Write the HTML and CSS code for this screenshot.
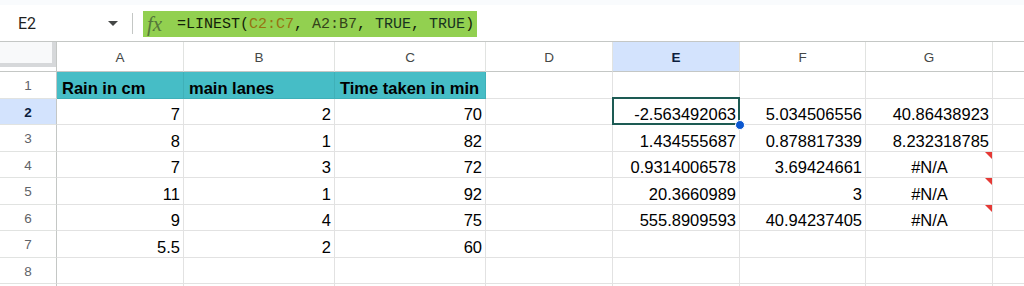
FILE: index.html
```html
<!DOCTYPE html>
<html lang="en">
<head>
<meta charset="utf-8">
<title>LINEST sheet</title>
<link rel="stylesheet" href="styles.css">
</head>
<body>
<div class="app">
  <div class="top-strip"></div>
  <div class="formula-bar">
    <div class="name-box"><span class="cell-ref">E2</span><span class="caret"></span></div>
    <div class="divider"></div>
    <div class="formula"><span class="fx">fx</span><span class="expr">=LINEST(<span class="rng1">C2:C7</span>, <span class="rng2">A2:B7</span>, <span class="kw">TRUE</span>, <span class="kw">TRUE</span>)</span></div>
  </div>
  <div class="sheet">
    <div class="corner"><div class="corner-box"></div></div>
    <div class="col-head">A</div>
    <div class="col-head">B</div>
    <div class="col-head">C</div>
    <div class="col-head">D</div>
    <div class="col-head active">E</div>
    <div class="col-head">F</div>
    <div class="col-head">G</div>
    <div class="col-head last"></div>

    <div class="row-head">1</div>
    <div class="cell hdr">Rain in cm</div>
    <div class="cell hdr">main lanes</div>
    <div class="cell hdr">Time taken in min</div>
    <div class="cell"></div>
    <div class="cell"></div>
    <div class="cell"></div>
    <div class="cell"></div>
    <div class="cell last"></div>

    <div class="row-head active">2</div>
    <div class="cell num">7</div>
    <div class="cell num">2</div>
    <div class="cell num">70</div>
    <div class="cell"></div>
    <div class="cell num selected">-2.563492063<span class="sel-box"></span><span class="fill-handle"></span></div>
    <div class="cell num">5.034506556</div>
    <div class="cell num">40.86438923</div>
    <div class="cell last"></div>

    <div class="row-head">3</div>
    <div class="cell num">8</div>
    <div class="cell num">1</div>
    <div class="cell num">82</div>
    <div class="cell"></div>
    <div class="cell num">1.434555687</div>
    <div class="cell num">0.878817339</div>
    <div class="cell num">8.232318785</div>
    <div class="cell last"></div>

    <div class="row-head">4</div>
    <div class="cell num">7</div>
    <div class="cell num">3</div>
    <div class="cell num">72</div>
    <div class="cell"></div>
    <div class="cell num">0.9314006578</div>
    <div class="cell num">3.69424661</div>
    <div class="cell center error">#N/A</div>
    <div class="cell last"></div>

    <div class="row-head">5</div>
    <div class="cell num">11</div>
    <div class="cell num">1</div>
    <div class="cell num">92</div>
    <div class="cell"></div>
    <div class="cell num">20.3660989</div>
    <div class="cell num">3</div>
    <div class="cell center error">#N/A</div>
    <div class="cell last"></div>

    <div class="row-head">6</div>
    <div class="cell num">9</div>
    <div class="cell num">4</div>
    <div class="cell num">75</div>
    <div class="cell"></div>
    <div class="cell num">555.8909593</div>
    <div class="cell num">40.94237405</div>
    <div class="cell center error">#N/A</div>
    <div class="cell last"></div>

    <div class="row-head">7</div>
    <div class="cell num">5.5</div>
    <div class="cell num">2</div>
    <div class="cell num">60</div>
    <div class="cell"></div>
    <div class="cell"></div>
    <div class="cell"></div>
    <div class="cell"></div>
    <div class="cell last"></div>

    <div class="row-head">8</div>
    <div class="cell"></div>
    <div class="cell"></div>
    <div class="cell"></div>
    <div class="cell"></div>
    <div class="cell"></div>
    <div class="cell"></div>
    <div class="cell"></div>
    <div class="cell last"></div>

    <div class="row-head"></div>
    <div class="cell"></div>
    <div class="cell"></div>
    <div class="cell"></div>
    <div class="cell"></div>
    <div class="cell"></div>
    <div class="cell"></div>
    <div class="cell"></div>
    <div class="cell last"></div>
  </div>
</div>
</body>
</html>
```
FILE: styles.css
```css
* { box-sizing: border-box; }
html, body { margin: 0; padding: 0; background: #ffffff; }
body { font-family: "Liberation Sans", Arial, sans-serif; color: #000; }
.app { width: 1024px; height: 286px; overflow: hidden; }

.top-strip { height: 5px; background: #f9fbfd; }

.formula-bar {
  height: 37px;
  display: flex;
  align-items: flex-start;
  border-bottom: 1px solid #c4c7c5;
  background: #fff;
}
.name-box {
  width: 124px;
  height: 36px;
  display: flex;
  align-items: center;
  justify-content: space-between;
  padding: 0 6px 0 18px;
}
.cell-ref { font-family: Roboto, "Liberation Sans", sans-serif; font-size: 16px; color: #1f1f1f; }
.caret {
  width: 0; height: 0;
  border-left: 5px solid transparent;
  border-right: 5px solid transparent;
  border-top: 5px solid #444746;
}
.divider { width: 1px; height: 21px; background: #c4c7c5; margin: 8px 0 0 8px; }
.formula {
  margin: 6px 0 0 10px;
  width: 334px;
  height: 26px;
  background: #92d050;
  display: flex;
  align-items: center;
}
.fx {
  font-family: "Liberation Serif", serif;
  font-style: italic;
  font-size: 21px;
  color: #55773a;
  margin-left: 4px;
  width: 30px;
  line-height: 20px;
}
.expr {
  font-family: "Liberation Mono", "DejaVu Sans Mono", monospace;
  font-size: 15px;
  color: #122008;
  white-space: pre;
  line-height: 20px;
  padding-top: 1px;
}
.rng1 { color: #967412; }
.rng2 { color: #35431a; }
.kw { color: #173320; }

.sheet {
  display: grid;
  grid-template-columns: 57px 127px 151px 151px 127px 127px 126px 127px 1fr;
  grid-template-rows: 30px 27px 26px 27px 26px 27px 26px 27px 26px 27px;
}
.corner { border-right: 1px solid #c4c7c5; border-bottom: 1px solid #c4c7c5; }
.corner-box {
  width: 56px; height: 25px;
  background: #f8f9fa;
  border-right: 4px solid #d6d8da;
  border-bottom: 4px solid #d6d8da;
}
.col-head {
  display: flex;
  align-items: center;
  justify-content: center;
  font-size: 13.5px;
  color: #444746;
  border-right: 1px solid #e1e3e1;
  border-bottom: 1px solid #c4c7c5;
  padding-top: 1px;
}
.col-head.active { background: #d3e3fd; color: #0b1d3e; font-weight: bold; }
.row-head {
  display: flex;
  align-items: center;
  justify-content: center;
  font-size: 13.5px;
  color: #5f6368;
  border-right: 1px solid #c4c7c5;
  border-bottom: 1px solid #e1e3e1;
  padding-top: 1px;
}
.row-head.active { background: #d3e3fd; color: #0b1d3e; font-weight: bold; }
.cell {
  position: relative;
  display: flex;
  align-items: flex-end;
  font-size: 16.5px;
  line-height: 19px;
  padding: 0 4px 0 5px;
  border-right: 1px solid #e2e2e2;
  border-bottom: 1px solid #e2e2e2;
  white-space: nowrap;
}
.last { border-right: none; }
.num { justify-content: flex-end; padding-right: 3px; }
.center { justify-content: center; }
.hdr { background: #46bdc6; font-weight: bold; border-right-color: #3fb0b8; border-bottom-color: #3fb0b8; }
.selected { z-index: 2; }
.sel-box {
  position: absolute;
  left: -1px; top: -2px; right: -1px; bottom: -1px;
  border: 2px solid #1d5b54;
  pointer-events: none;
}
.fill-handle {
  position: absolute;
  right: -6px; bottom: -6px;
  width: 10px; height: 10px;
  border-radius: 50%;
  background: #0b57d0;
  border: 1px solid #fff;
}
.error::after {
  content: "";
  position: absolute;
  top: 0; right: 0;
  width: 0; height: 0;
  border-top: 7px solid #e53935;
  border-left: 7px solid transparent;
}
```
